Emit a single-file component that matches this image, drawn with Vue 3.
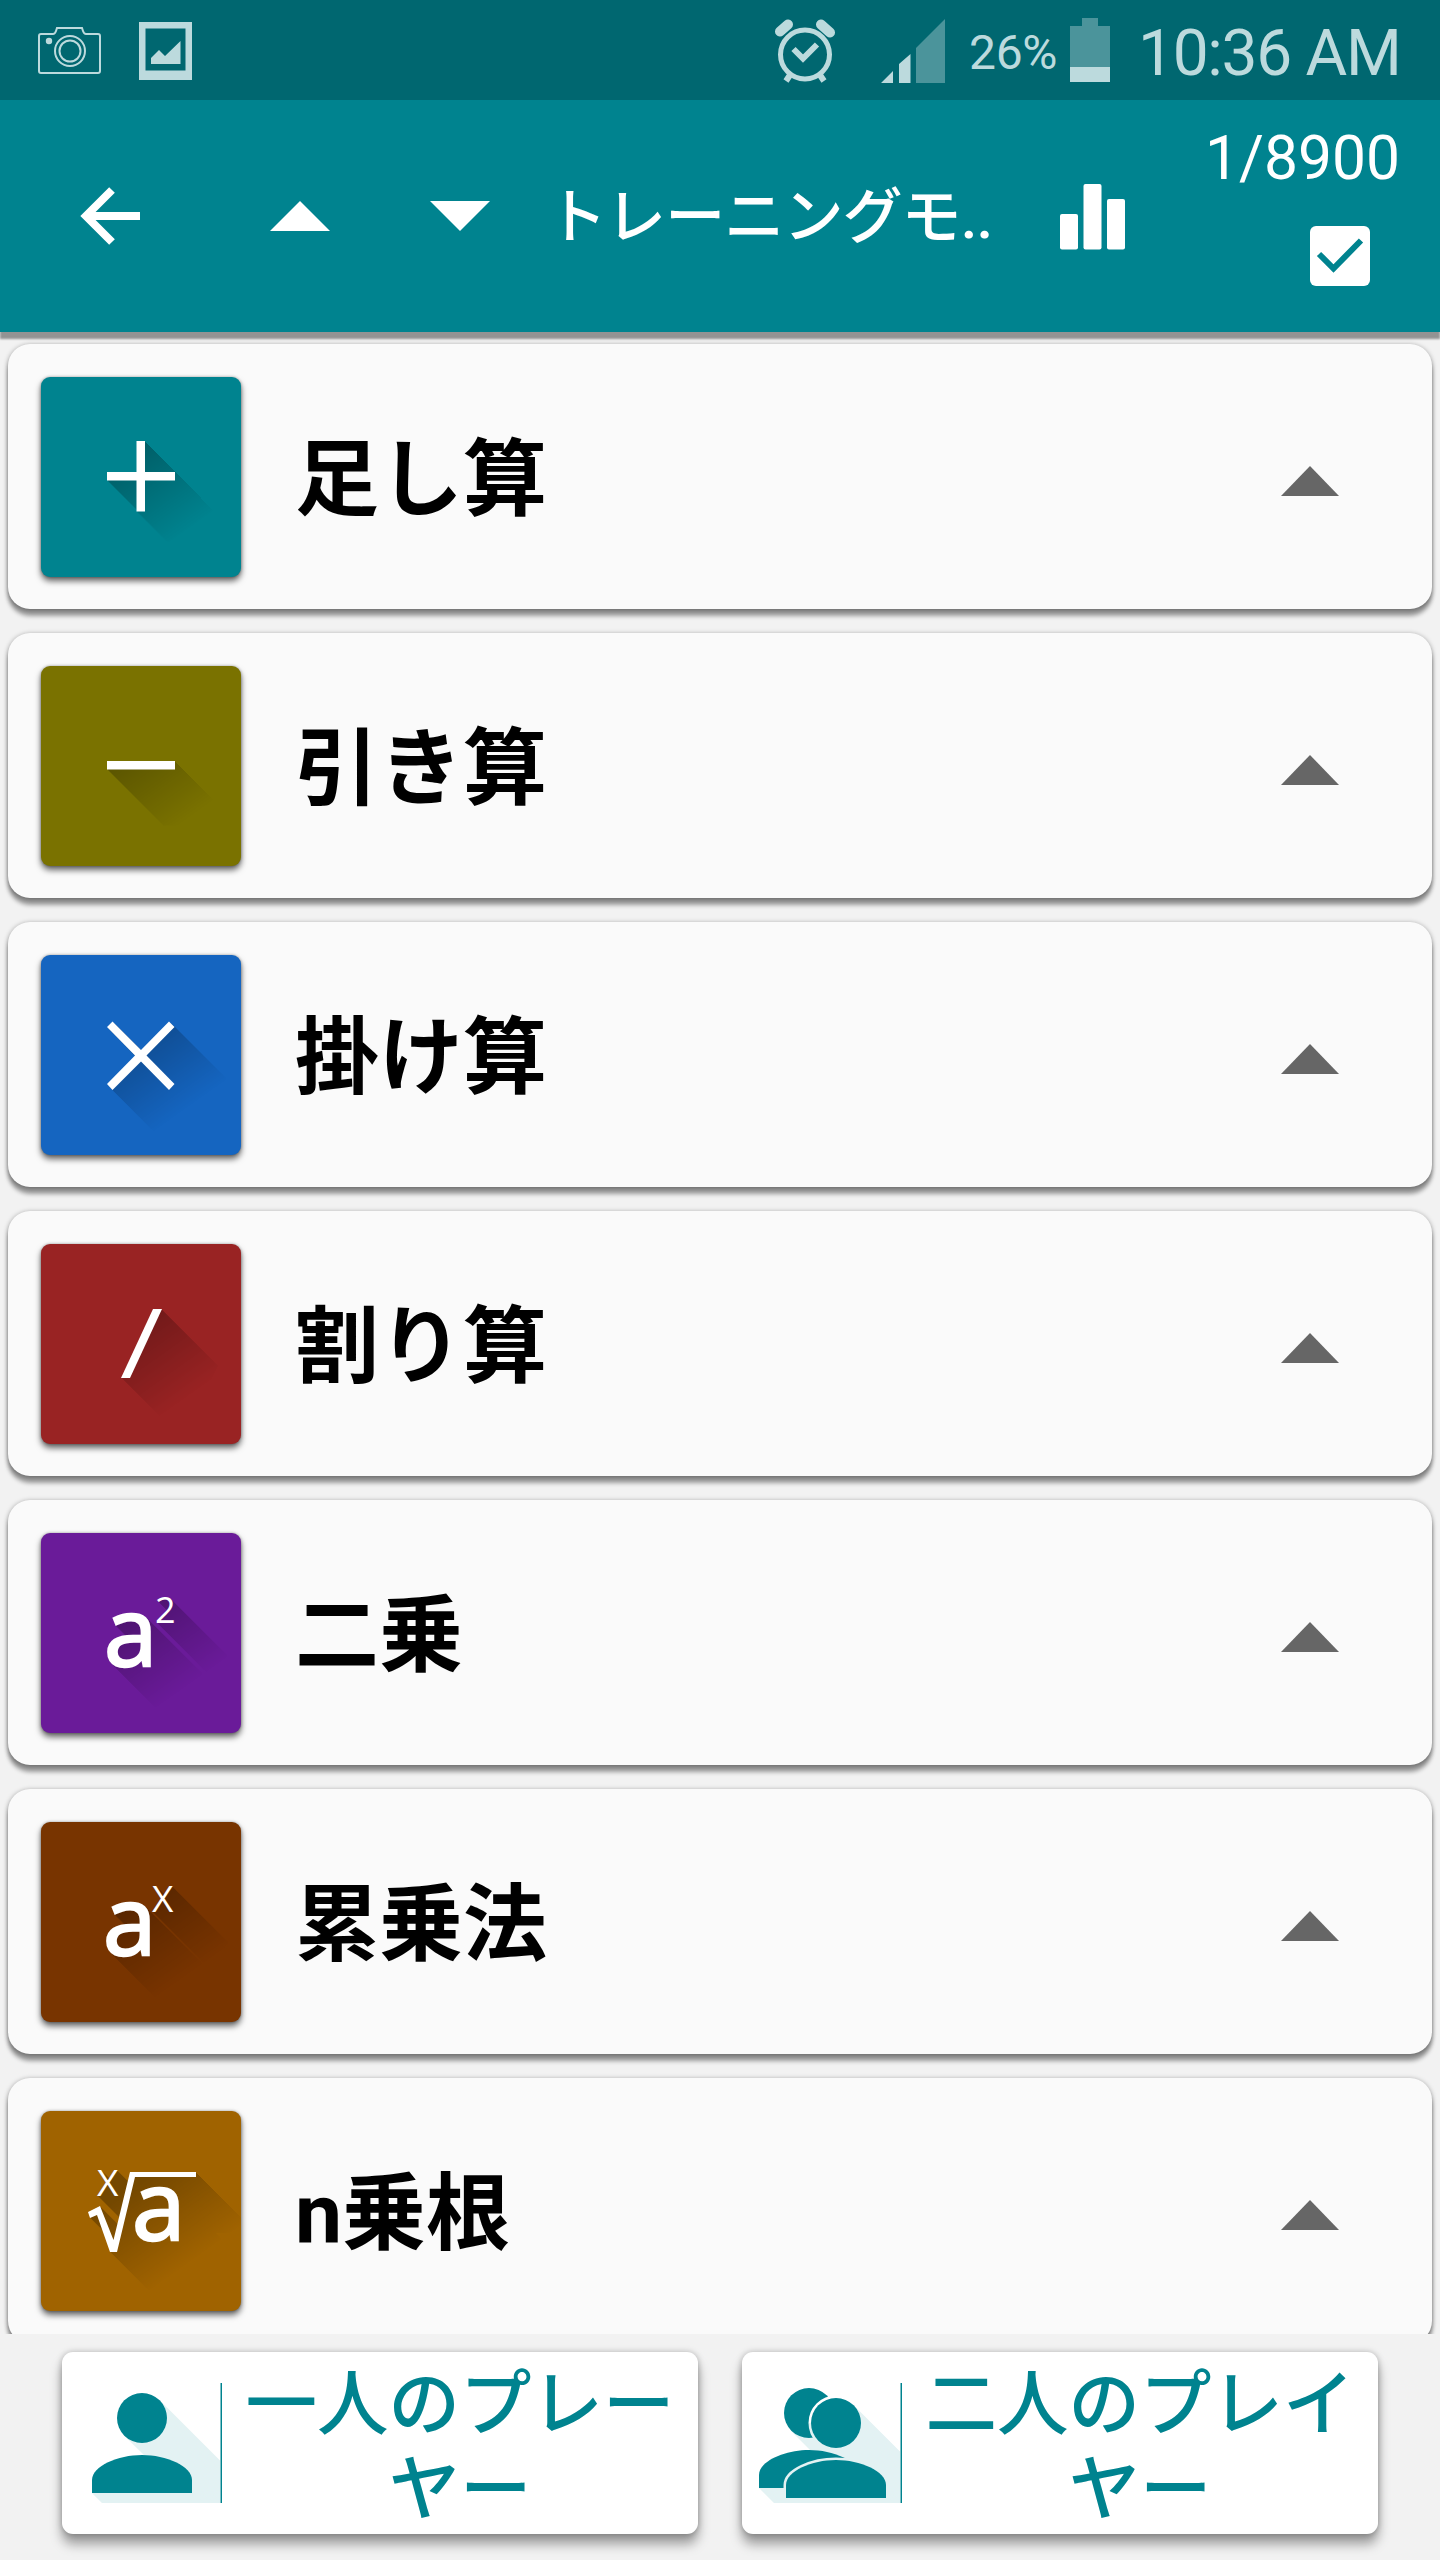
<script setup>
import { ref } from "vue";

const operations = ref([
  { id: "add", label: "足し算", color: "#00838f" },
  { id: "subtract", label: "引き算", color: "#7a7200" },
  { id: "multiply", label: "掛け算", color: "#1565c0" },
  { id: "divide", label: "割り算", color: "#992323" },
  { id: "square", label: "二乗", color: "#6a1b99" },
  { id: "power", label: "累乗法", color: "#783400" },
  { id: "root", label: "n乗根", color: "#a06300" },
]);

// length of the diagonal shadow behind each symbol
const shadowSteps = 56;
</script>

<template>
  <div class="screen">
    <div class="status-bar">
      <svg class="camera" width="64" height="48" viewBox="0 0 64 48" fill="none" stroke="currentColor" stroke-width="2">
        <path d="M3 7h12q2 0 3-3l1-3h25l1 3q1 3 3 3h12q2 0 2 2v35q0 2-2 2H3q-2 0-2-2V9q0-2 2-2z" />
        <circle cx="32" cy="24" r="15" />
        <circle cx="32" cy="24" r="10.5" />
        <circle cx="11" cy="14" r="2.2" fill="currentColor" />
      </svg>
      <svg class="picture" width="53" height="58" viewBox="0 0 53 58" fill="currentColor">
        <path fill-rule="evenodd" d="M0 0h53v58H0zM6.500 6.500v42h40v-42z" />
        <path d="M12 42v-6l8-8 6 6 15.500-15v23z" />
      </svg>
      <div class="status-right">
        <svg class="alarm" width="60" height="64" viewBox="0 0 60 64" fill="none" stroke="currentColor">
          <circle cx="30" cy="35.500" r="24.500" stroke-width="5" />
          <path d="M18.500 30l9.500 9.500L42 25.500" stroke-width="6" />
          <path d="M5 12.500L13 5.500M46 5.500l9 8" stroke-width="10" stroke-linecap="round" />
          <path d="M15 56l-4 6M45 56l4 6" stroke-width="6" />
        </svg>
        <svg class="signal" width="64" height="64" viewBox="0 0 64 64" fill="currentColor">
          <path d="M0 64l12-12v12zM18 64V45l11.500-10v29z" />
          <path d="M35 64V29L64 0v64z" opacity=".4" />
        </svg>
        <span class="percent">26%</span>
        <svg class="battery" width="40" height="64" viewBox="0 0 40 64" fill="currentColor">
          <path d="M12 0h16v8h12v41H0V8h12z" opacity=".4" />
          <path d="M0 49h40v15H0z" />
        </svg>
        <span class="clock">10:36 AM</span>
      </div>
    </div>

    <header class="toolbar">
      <svg class="back" width="60" height="58" viewBox="0 0 60 58" fill="none" stroke="#fff" stroke-width="8">
        <path d="M32 3L6 29l26 26M5 29h55" />
      </svg>
      <svg class="up" width="60" height="30" viewBox="0 0 60 30" fill="#fff">
        <path d="M30 0l30 30H0z" />
      </svg>
      <svg class="down" width="60" height="30" viewBox="0 0 60 30" fill="#fff">
        <path d="M0 0h60L30 30z" />
      </svg>
      <h1>トレーニングモ..</h1>
      <svg class="stats" width="65" height="66" viewBox="0 0 65 66" fill="#fff">
        <rect x="0" y="30" width="18" height="35.500" rx="2" />
        <rect x="23.500" y="0" width="18" height="65.500" rx="2" />
        <rect x="47" y="15" width="18" height="50.500" rx="2" />
      </svg>
      <div class="progress">
        <span>1/8900</span>
        <svg width="60" height="60" viewBox="0 0 60 60">
          <rect width="60" height="60" rx="6" fill="#fff" />
          <path d="M9 28l14.500 14.500L51 14.500" fill="none" stroke="#00838f" stroke-width="6" />
        </svg>
      </div>
    </header>

    <main class="list">
      <svg class="defs" width="0" height="0">
        <defs>
          <linearGradient id="fade" gradientUnits="userSpaceOnUse" x1="88" y1="80" x2="142" y2="156">
            <stop offset="0" stop-color="#fff" />
            <stop offset="1" stop-color="#fff" stop-opacity="0" />
          </linearGradient>
          <mask id="fade-mask" maskUnits="userSpaceOnUse" x="0" y="0" width="200" height="200">
            <rect width="200" height="200" fill="url(#fade)" />
          </mask>
        </defs>
      </svg>
      <section v-for="op in operations" :key="op.id" class="card">
        <div class="tile" :style="{ backgroundColor: op.color }">
          <svg width="200" height="200" viewBox="0 0 200 200">
            <g mask="url(#fade-mask)">
              <g class="long-shadow">
                <use v-for="n in shadowSteps" :key="n" :href="'#' + op.id" :x="n" :y="n" />
              </g>
            </g>
            <g class="symbol">
              <g :id="op.id">
                <path v-if="op.id === 'add'" d="M95.500 64h8.500v31h30v8.500h-30v31h-8.500v-31H66V95h29.500z" />
                <path v-else-if="op.id === 'subtract'" d="M66 95h68v8.500H66z" />
                <path v-else-if="op.id === 'multiply'" d="M71.500 66.500L100 95l28-28.500 5.500 5.500-28 28.500 28 28.500-5.500 6-28-28.500L71.500 135l-5.500-6 28-28.500L66 72z" />
                <path v-else-if="op.id === 'divide'" d="M112 65h9L89 134h-9z" />
                <template v-else-if="op.id === 'square'">
                  <text class="base" x="63" y="133" font-size="96">a</text>
                  <text x="114" y="90" font-size="36">2</text>
                </template>
                <template v-else-if="op.id === 'power'">
                  <text class="base" x="62" y="133" font-size="96">a</text>
                  <text x="111" y="90" font-size="37">X</text>
                </template>
                <template v-else>
                  <text class="base" x="91" y="129" font-size="96">a</text>
                  <text x="56" y="85" font-size="37">X</text>
                  <path d="M47 101l12-6 13.500 34L89 61h66v5H94l-18 75h-7L56 104l-7 3z" />
                </template>
              </g>
            </g>
          </svg>
        </div>
        <h2>{{ op.label }}</h2>
        <svg class="caret" width="58" height="30" viewBox="0 0 58 30">
          <path d="M29 0l29 30H0z" fill="#666" />
        </svg>
      </section>
    </main>

    <footer class="players">
      <button>
        <svg width="160" height="182" viewBox="0 0 160 182" fill="#00838f">
          <path d="M97.700 48.300L158 108.600V151H40L30 141l52-38-19.700-19.300z" fill="#e3f2f3" />
          <circle cx="80" cy="66" r="25" />
          <path d="M30 141v-13c0-14 26-25 50-25s50 11 50 25v13z" />
          <path d="M158.500 31h1.500v120h-1.500z" />
        </svg>
        <span>一人のプレーヤー</span>
      </button>
      <button>
        <svg width="160" height="182" viewBox="0 0 160 182" fill="#00838f">
          <mask id="front-gap" maskUnits="userSpaceOnUse" x="0" y="0" width="160" height="182">
            <rect width="160" height="182" fill="#fff" />
            <g fill="#000" stroke="#000" stroke-width="5">
              <circle cx="94" cy="71" r="25" />
              <path d="M44 146v-13c0-14 26-25 50-25s50 11 50 25v13z" />
            </g>
          </mask>
          <path d="M111.700 53.300L158 99.600V151H32L17 136l51-38-19.200-19.300z" fill="#e3f2f3" />
          <g mask="url(#front-gap)">
            <circle cx="67" cy="61" r="25" />
            <path d="M17 136v-13c0-14 26-25 50-25s50 11 50 25v13z" />
          </g>
          <circle cx="94" cy="71" r="25" />
          <path d="M44 146v-13c0-14 26-25 50-25s50 11 50 25v13z" />
          <path d="M158.500 31h1.500v120h-1.500z" />
        </svg>
        <span>二人のプレイヤー</span>
      </button>
    </footer>
  </div>
</template>

<style>
body {
  margin: 0;
}
</style>

<style scoped>
.screen {
  width: 1440px;
  height: 2560px;
  display: flex;
  flex-direction: column;
  overflow: hidden;
  background-color: #f2f2f2;
  font-family: Roboto, "Noto Sans CJK JP", sans-serif;
}

svg {
  display: block;
  flex: none;
}

.status-bar {
  height: 100px;
  flex: none;
  display: flex;
  align-items: flex-start;
  background-color: #006770;
  color: #bcdadd;
}

.camera {
  margin: 27px 0 0 38px;
}

.picture {
  margin: 22px 0 0 37px;
}

.status-right {
  margin-left: auto;
  padding-right: 39px;
  display: flex;
  align-items: flex-start;
  white-space: nowrap;
}

.alarm {
  margin: 19px 46px 0 0;
}

.signal {
  margin: 19px 24px 0 0;
}

.percent {
  width: 101px;
  margin-top: 19px;
  font-size: 48px;
  line-height: 68px;
  letter-spacing: -0.3px;
}

.battery {
  margin: 18px 28px 0 0;
}

.clock {
  width: 263px;
  margin-top: 19px;
  font-size: 64px;
  line-height: 70px;
  letter-spacing: -1.3px;
}

.toolbar {
  position: relative;
  z-index: 1;
  height: 232px;
  flex: none;
  display: flex;
  align-items: center;
  background-color: #00838f;
  color: #fff;
  box-shadow: 0 7px 2px #939393;
}

.back {
  margin-left: 80px;
}

.up {
  margin-left: 130px;
}

.down {
  margin-left: 100px;
}

h1 {
  width: 513px;
  margin: 4px 0 0 57px;
  font-size: 60px;
  font-weight: 500;
  line-height: 80px;
  letter-spacing: -0.9px;
  white-space: nowrap;
}

.stats {
  margin-top: 1px;
}

.progress {
  align-self: flex-start;
  margin: 23px 40px 0 auto;
  display: flex;
  flex-direction: column;
  align-items: flex-end;
  font-size: 60.5px;
  line-height: 72px;
}

.progress svg {
  margin: 31px 30px 0 0;
}

.list {
  height: 2002px;
  flex: none;
  box-sizing: border-box;
  padding: 12px 8px 0;
  display: flex;
  flex-direction: column;
  gap: 24px;
  overflow: hidden;
}

.defs {
  position: absolute;
}

.card {
  height: 265px;
  flex: none;
  box-sizing: border-box;
  padding: 0 93px 0 33px;
  display: flex;
  align-items: center;
  border-radius: 22px;
  background-color: #fafafa;
  box-shadow: 0 7px 4px rgba(0, 0, 0, 0.36), 0 1px 5px rgba(0, 0, 0, 0.38);
}

.tile {
  width: 200px;
  height: 200px;
  border-radius: 9px;
  box-shadow: 0 4px 6px rgba(0, 0, 0, 0.6), 0 0 3px rgba(0, 0, 0, 0.3);
}

.symbol {
  fill: #fff;
  stroke: #fff;
  stroke-width: 0;
}

.long-shadow {
  fill: #000;
  stroke: #000;
  stroke-width: 0;
  opacity: 0.27;
}

.tile text {
  font-family: "Open Sans", "Noto Sans", sans-serif;
}

.tile .base {
  stroke-width: 2.5px;
}

h2 {
  flex: 1;
  margin: 9px 0 0 54px;
  font-size: 84px;
  font-weight: 700;
  line-height: 120px;
  color: #000;
}

.caret {
  margin-top: 9px;
}

.players {
  flex: 1;
  padding: 18px 62px 0;
  display: flex;
  justify-content: space-between;
  align-items: flex-start;
  background-color: #f2f2f2;
}

button {
  width: 636px;
  height: 182px;
  padding: 0;
  border: none;
  border-radius: 11px;
  display: flex;
  align-items: center;
  background-color: #fff;
  color: #00838f;
  font-family: inherit;
  font-size: 71.5px;
  font-weight: 500;
  line-height: 85px;
  box-shadow: 0 10px 12px rgba(0, 0, 0, 0.36), 0 0 6px rgba(0, 0, 0, 0.25);
}

button span {
  flex: 1;
  margin-top: 8px;
  text-align: center;
  line-break: anywhere;
}
</style>
